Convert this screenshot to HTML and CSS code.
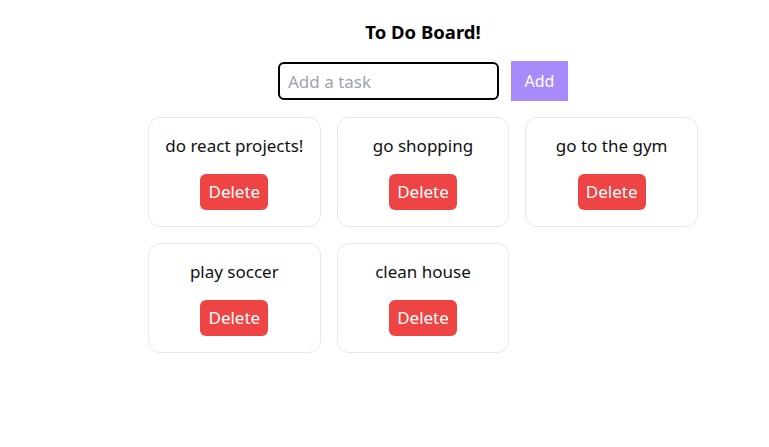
FILE: index.html
```html
<!DOCTYPE html>
<html lang="en">
<head>
<meta charset="utf-8">
<title>To Do Board</title>
<link rel="stylesheet" href="styles.css">
</head>
<body>
<main class="board">
  <h1 class="title">To Do Board!</h1>
  <form class="add-form">
    <input class="task-input" type="text" placeholder="Add a task">
    <button class="add-btn" type="button">Add</button>
  </form>
  <div class="grid">
    <div class="card"><p class="card-text">do react projects!</p><button class="del-btn" type="button">Delete</button></div>
    <div class="card"><p class="card-text">go shopping</p><button class="del-btn" type="button">Delete</button></div>
    <div class="card"><p class="card-text">go to the gym</p><button class="del-btn" type="button">Delete</button></div>
    <div class="card"><p class="card-text">play soccer</p><button class="del-btn" type="button">Delete</button></div>
    <div class="card"><p class="card-text">clean house</p><button class="del-btn" type="button">Delete</button></div>
  </div>
</main>
</body>
</html>
```
FILE: styles.css
```css
* { box-sizing: border-box; }
html, body { margin: 0; padding: 0; background: #fff; }
body { font-family: "Noto Sans", "Open Sans", sans-serif; color: #111; }
.board { width: 550px; margin-left: 148px; padding-top: 18px; display: flex; flex-direction: column; align-items: center; }
.title { margin: 0; font-size: 18.5px; line-height: 28px; font-weight: 700; color: #000; }
.add-form { margin-top: 15px; display: flex; align-items: center; gap: 12px; }
.task-input { width: 221px; height: 38px; border: 2px solid #000; border-radius: 6px; padding: 0 8px; font-family: inherit; font-size: 17px; color: #111; outline: none; }
.task-input::placeholder { color: #9ca3af; }
.add-btn { width: 57px; height: 40px; padding: 0; border: none; background: #a78bfa; color: #fff; font-family: inherit; font-size: 16px; }
.grid { margin-top: 16px; width: 100%; display: grid; grid-template-columns: repeat(3, 1fr); gap: 16px; }
.card { border: 1px solid #e5e7eb; border-radius: 12px; padding: 16px 8px; display: flex; flex-direction: column; align-items: center; }
.card-text { margin: 0 0 16px; font-size: 17px; line-height: 24px; white-space: nowrap; }
.del-btn { border: none; border-radius: 6px; background: #ef4444; color: #fff; font-family: inherit; font-size: 17px; line-height: 24px; padding: 6px 8px; }
```
